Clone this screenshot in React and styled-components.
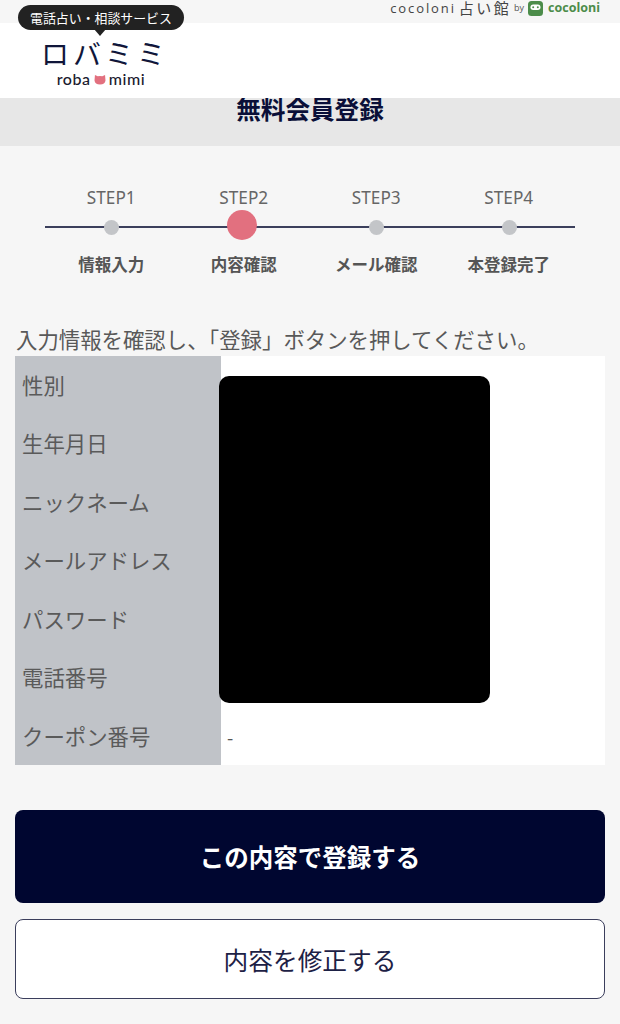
import React from "react";
import styled, { createGlobalStyle } from "styled-components";

const GlobalStyle = createGlobalStyle`
  html, body {
    margin: 0;
    padding: 0;
    background: #f6f6f6;
  }
  body {
    font-family: "Noto Sans CJK JP", "Noto Sans", sans-serif;
    color: #555;
  }
`;

const Page = styled.div`
  width: 620px;
  height: 1024px;
  overflow: hidden;
`;

const TopBar = styled.div`
  height: 23px;
  display: flex;
  justify-content: flex-end;
  align-items: flex-start;
  padding-right: 20px;
  box-sizing: border-box;
`;

const BrandRow = styled.div`
  display: flex;
  align-items: center;
  height: 16px;
  color: #444;
`;

const BrandName = styled.span`
  font-family: "Open Sans", sans-serif;
  font-size: 13px;
  line-height: 16px;
  letter-spacing: 1.9px;
`;

const BrandKanji = styled.span`
  font-size: 15px;
  line-height: 16px;
  margin-left: 3px;
  letter-spacing: 2.4px;
`;

const BrandBy = styled.span`
  font-family: "Open Sans", sans-serif;
  font-size: 9px;
  line-height: 16px;
  margin-left: 3px;
  color: #555;
`;

const BrandIcon = styled.svg`
  width: 15px;
  height: 15px;
  margin-left: 4px;
`;

const BrandGreen = styled.span`
  font-family: "Open Sans", sans-serif;
  font-weight: 700;
  font-size: 12.5px;
  line-height: 16px;
  color: #4c8c4a;
  margin-left: 5px;
`;

const Header = styled.header`
  height: 75px;
  background: #fff;
  position: relative;
`;

const Tooltip = styled.div`
  position: absolute;
  left: 18px;
  top: -18px;
  width: 166px;
  height: 25px;
  border-radius: 13px;
  background: #222;
  color: #fff;
  font-size: 12.9px;
  line-height: 26px;
  text-align: center;
  white-space: nowrap;
  &::after {
    content: "";
    position: absolute;
    left: 76px;
    top: 24px;
    border-left: 6px solid transparent;
    border-right: 6px solid transparent;
    border-top: 7px solid #222;
  }
`;

const Logo = styled.div`
  padding: 13px 0 0 41px;
  display: flex;
  flex-direction: column;
  width: 125px;
`;

const LogoName = styled.div`
  font-size: 28px;
  font-weight: 400;
  line-height: 34px;
  letter-spacing: 4px;
  color: #10163a;
  white-space: nowrap;
`;

const LogoSub = styled.div`
  display: flex;
  align-items: center;
  justify-content: center;
  gap: 3px;
  font-family: "Lato", sans-serif;
  font-weight: 500;
  font-size: 16px;
  line-height: 16px;
  letter-spacing: 0.6px;
  color: #1a1a2e;
  margin-top: 1px;
  width: 100px;
  margin-left: 10px;
`;

const TitleBand = styled.div`
  height: 48px;
  background: #e7e7e7;
  text-align: center;
`;

const Title = styled.h1`
  margin: 0;
  font-size: 24.6px;
  font-weight: 700;
  line-height: 20px;
  color: #0a0f38;
`;

const Steps = styled.ol`
  list-style: none;
  margin: 0;
  padding: 0 45px;
  height: 133px;
  display: grid;
  grid-template-columns: repeat(4, 132.5px);
  position: relative;
  &::before {
    content: "";
    position: absolute;
    left: 45px;
    right: 45px;
    top: 80px;
    height: 2px;
    background: #3b3f5c;
  }
`;

const Step = styled.li`
  display: flex;
  flex-direction: column;
  align-items: center;
  position: relative;
  padding-top: 41px;
`;

const StepLabel = styled.div`
  font-family: "Noto Sans", sans-serif;
  font-size: 17.2px;
  line-height: 22px;
  color: #666;
`;

const DotSlot = styled.div`
  height: 30px;
  margin-top: 3px;
  display: flex;
  align-items: center;
  justify-content: center;
`;

const Dot = styled.div`
  width: ${(p) => (p.$active ? 30 : 15)}px;
  height: ${(p) => (p.$active ? 30 : 15)}px;
  border-radius: 50%;
  background: ${(p) => (p.$active ? "#e2707f" : "#c3c5c8")};
  position: relative;
  left: ${(p) => (p.$active ? -2 : 0.5)}px;
  top: ${(p) => (p.$active ? -2 : 0)}px;
`;

const StepName = styled.div`
  font-size: 16.5px;
  font-weight: 700;
  line-height: 22px;
  margin-top: 11px;
  color: #555;
  white-space: nowrap;
`;

const Lead = styled.p`
  margin: 43px 0 0 16px;
  font-size: 21.4px;
  line-height: 33px;
  color: #595959;
  white-space: nowrap;
`;

const TableWrap = styled.div`
  margin: 1px 15px 0;
  position: relative;
`;

const Table = styled.dl`
  margin: 0;
  display: grid;
  grid-template-columns: 206px 1fr;
  grid-auto-rows: 58.43px;
  background: #fff;
`;

const Label = styled.dt`
  background: #c0c3c8;
  padding-left: 7px;
  font-size: 21.4px;
  line-height: 58px;
  color: #5a5a5a;
  white-space: nowrap;
`;

const Value = styled.dd`
  margin: 0;
  padding-left: 6px;
  font-size: 18px;
  line-height: 60px;
  color: #555;
`;

const Redaction = styled.div`
  position: absolute;
  left: 204px;
  top: 20px;
  width: 271px;
  height: 327px;
  border-radius: 10px;
  background: #000;
`;

const Actions = styled.div`
  margin: 45px 15px 0;
  display: flex;
  flex-direction: column;
  gap: 16px;
`;

const Button = styled.button`
  display: block;
  width: 100%;
  box-sizing: border-box;
  height: ${(p) => (p.$primary ? 93 : 80)}px;
  border-radius: 8px;
  border: ${(p) => (p.$primary ? "none" : "1.5px solid #3b3e5c")};
  background: ${(p) => (p.$primary ? "#000630" : "#fff")};
  color: ${(p) => (p.$primary ? "#fff" : "#1d2145")};
  font-family: inherit;
  font-size: ${(p) => (p.$primary ? 24.5 : 24.7)}px;
  font-weight: ${(p) => (p.$primary ? 700 : 400)};
  padding: 0;
`;

const steps = [
  ["STEP1", "情報入力"],
  ["STEP2", "内容確認"],
  ["STEP3", "メール確認"],
  ["STEP4", "本登録完了"],
];

const rows = [
  ["性別", ""],
  ["生年月日", ""],
  ["ニックネーム", ""],
  ["メールアドレス", ""],
  ["パスワード", ""],
  ["電話番号", ""],
  ["クーポン番号", "-"],
];

const App = () => {
  return (
    <Page>
      <GlobalStyle />
      <TopBar>
        <BrandRow>
          <BrandName>cocoloni</BrandName>
          <BrandKanji>占い館</BrandKanji>
          <BrandBy>by</BrandBy>
          <BrandIcon viewBox="0 0 15 15">
            <rect width="15" height="15" rx="3.5" fill="#4c8c4a" />
            <rect x="2.5" y="3.5" width="10" height="5.5" rx="2.7" fill="#fff" />
            <circle cx="5.2" cy="6.2" r="1" fill="#4c8c4a" />
            <circle cx="9.8" cy="6.2" r="1" fill="#4c8c4a" />
          </BrandIcon>
          <BrandGreen>cocoloni</BrandGreen>
        </BrandRow>
      </TopBar>
      <Header>
        <Tooltip>電話占い・相談サービス</Tooltip>
        <Logo>
          <LogoName>ロバミミ</LogoName>
          <LogoSub>
            <span>roba</span>
            <svg width="12" height="11" viewBox="0 0 13 12">
              <path
                d="M1 1 L4 2.5 Q6.5 2 9 2.5 L12 1 L12.5 7 Q12 11.5 6.5 11.5 Q1 11.5 .5 7 Z"
                fill="#e2707f"
              />
            </svg>
            <span>mimi</span>
          </LogoSub>
        </Logo>
      </Header>
      <TitleBand>
        <Title>無料会員登録</Title>
      </TitleBand>
      <Steps>
        {steps.map(([label, name], i) => (
          <Step key={label}>
            <StepLabel>{label}</StepLabel>
            <DotSlot>
              <Dot $active={i === 1} />
            </DotSlot>
            <StepName>{name}</StepName>
          </Step>
        ))}
      </Steps>
      <Lead>入力情報を確認し、「登録」ボタンを押してください。</Lead>
      <TableWrap>
        <Table>
          {rows.map(([label, value]) => (
            <React.Fragment key={label}>
              <Label>{label}</Label>
              <Value>{value}</Value>
            </React.Fragment>
          ))}
        </Table>
        <Redaction />
      </TableWrap>
      <Actions>
        <Button $primary>この内容で登録する</Button>
        <Button>内容を修正する</Button>
      </Actions>
    </Page>
  );
};

export default App;
